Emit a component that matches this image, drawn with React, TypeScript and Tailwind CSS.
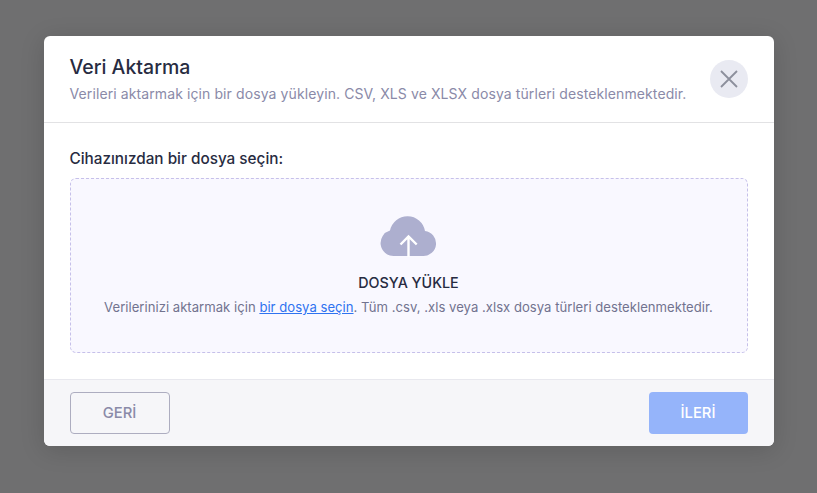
export default function App() {
  return (
    <div className="flex h-screen items-start justify-center bg-[#6f6f70] pt-[36px] font-['Inter',sans-serif]">
      <div className="w-[730px] overflow-hidden rounded-[6px] bg-white shadow-[0_4px_24px_rgba(0,0,0,0.15)]">
        <div className="flex h-[87px] items-start justify-between border-b border-[#e2e2e4] pl-[26px] pr-[26px] pt-[19px]">
          <div>
            <h1 className="text-[19.5px] font-medium leading-[24px] text-[#272b41]">Veri Aktarma</h1>
            <p className="mt-[5px] text-[14px] leading-[20px] tracking-[0.1px] text-[#8a8aa8]">
              Verileri aktarmak için bir dosya yükleyin. CSV, XLS ve XLSX dosya türleri desteklenmektedir.
            </p>
          </div>
          <button className="mt-[5px] flex h-[38px] w-[38px] items-center justify-center rounded-full bg-[#e9eaf2]">
            <svg width="18" height="18" viewBox="0 0 18 18" fill="none" stroke="#8c8f9c" strokeWidth="1.8">
              <path d="M1 1L17 17M17 1L1 17" />
            </svg>
          </button>
        </div>

        <div className="h-[256px] px-[26px] pt-[27px]">
          <label className="block text-[15.3px] font-medium leading-[18px] text-[#272b41]">Cihazınızdan bir dosya seçin:</label>
          <div className="mt-[10px] flex h-[175px] flex-col items-center rounded-[6px] border border-dashed border-[#c6c0ea] bg-[#f9f8ff] pt-[37px]">
            <svg width="57" height="41" viewBox="0 0 57 41">
              <path d="M13.5 40A13 13 0 0 1 10 14.5A17.8 17.8 0 0 1 45 15A12.55 12.55 0 0 1 43 40Z" fill="#adafcf" />
              <path d="M28.5 41V21M20.5 28.5L28.5 20.5L36.7 28.5" fill="none" stroke="#ffffff" strokeWidth="2.4" />
            </svg>
            <div className="mt-[17px] text-[14.3px] font-medium leading-[18px] text-[#272b41]">DOSYA YÜKLE</div>
            <p className="mt-[6px] text-[13.1px] leading-[18px] tracking-[0.02px] text-[#72738f]">
              Verilerinizi aktarmak için <a className="text-[#2f73f0] underline">bir dosya seçin</a>. Tüm .csv, .xls veya .xlsx dosya türleri desteklenmektedir.
            </p>
          </div>
        </div>

        <div className="flex h-[67px] items-center justify-between border-t border-[#e8e8ee] bg-[#f6f6f9] px-[26px]">
          <button className="h-[42px] w-[100px] rounded-[4px] border border-[#adadc0] text-[14.8px] font-medium text-[#8a8aa8]">GERİ</button>
          <button className="h-[42px] w-[99px] rounded-[4px] bg-[#95b4fa] text-[14.8px] font-medium text-white">İLERİ</button>
        </div>
      </div>
    </div>
  );
}
